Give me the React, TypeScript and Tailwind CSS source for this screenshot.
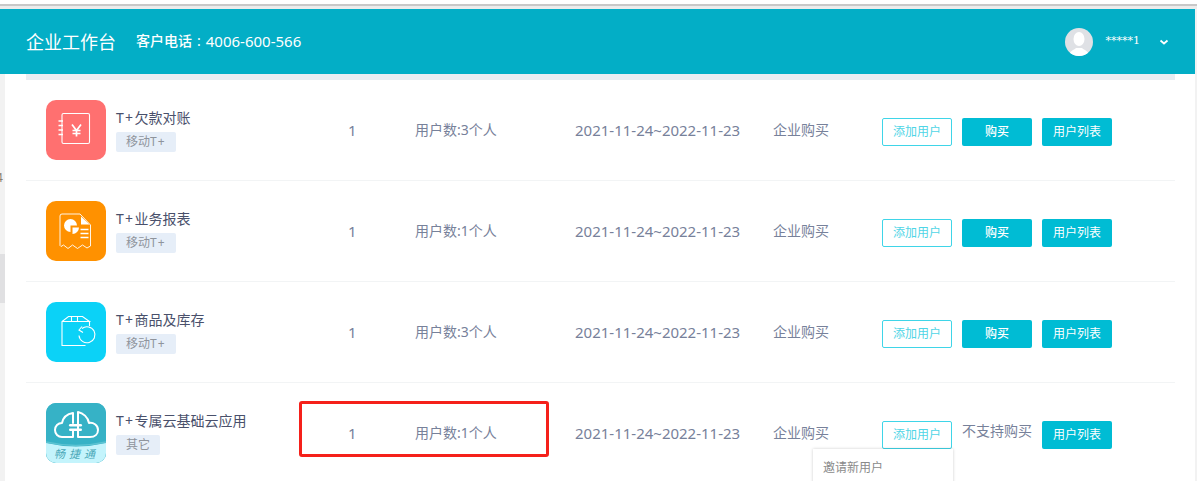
const fontStack = { fontFamily: '"Noto Sans", "Noto Sans CJK SC", sans-serif' };

const BookIcon = () => (
  <svg viewBox="0 0 60 60" className="h-[60px] w-[60px]" fill="none" stroke="#fff">
    <rect x="16" y="13.500" width="27.500" height="30" rx="1.500" strokeWidth="1.100" />
    <path d="M12.500 21h4.500M12.500 25.500h4.500M12.500 30h4.500M12.500 34.500h4.500" strokeWidth="1.300" />
    <path d="M26 24.500l4.500 6 4.500-6M30.500 30.500v6M26.500 30.500h8M26.500 33.500h8" strokeWidth="1.700" />
  </svg>
);

const ReportIcon = () => (
  <svg viewBox="0 0 60 60" className="h-[60px] w-[60px]" fill="none" stroke="#fff">
    <path d="M14 15q0-2 2-2h18l10.500 11v21l-3.500 2-4.500-3-5 3.500-5-3.500-4.500 3.500-4.500-3.500-2.500 1.500-1-1z" strokeWidth="0.900" />
    <path d="M35 15.500l8.500 8H35z" fill="#fff" stroke="none" />
    <path d="M24.500 18a6.500 6.500 0 1 0 0 13v-6.500h6.500a6.500 6.500 0 0 0-6.500-6.500z" fill="#fff" stroke="none" />
    <path d="M26.500 26.500h6.500a6.500 6.500 0 0 1-6.500 6.500z" fill="#fff" stroke="none" />
    <path d="M34.500 28.500h8M34.500 32.500h8M34.500 36.500h8" strokeWidth="1.700" />
  </svg>
);

const BoxIcon = () => (
  <svg viewBox="0 0 60 60" className="h-[60px] w-[60px]" fill="none" stroke="#fff" strokeWidth="1.100">
    <path d="M43.500 24v-4.500M39.500 43.500H16V19.500l6.500-5h14l7 5H16M25.500 14.500v5M31.500 14.500v5" />
    <path d="M36 26.500A8 8 0 1 1 33 33.500" />
    <path d="M36 24.500l-3 3.500 4 2.500" />
  </svg>
);

const CloudIcon = () => (
  <svg viewBox="0 0 60 60" className="h-[60px] w-[60px]">
    <rect width="60" height="60" fill="#36b2c6" />
    <path d="M0 40q30 7 60 0v20H0z" fill="#c4f4fc" />
    <path d="M0 39q30 7 60 0" fill="none" stroke="#5cc3d2" strokeWidth="1.500" />
    <g fill="none" stroke="#fff" strokeWidth="2" strokeLinecap="round" strokeLinejoin="round">
      <path d="M27 10C21 11 17 15 16 20 12 20 9 23 9 27 9 31 12 34 16 34H27V28M27 10V20" />
      <path d="M32 9V34H44C49 34 52 31 52 27 52 22 47 19 43 20 42 14 37 10 32 9z" />
    </g>
    <rect x="23" y="21" width="13" height="2.600" rx="1.300" fill="#fff" />
    <rect x="23" y="25.500" width="13" height="2.600" rx="1.300" fill="#fff" />
    <text x="30.500" y="55" textAnchor="middle" fontSize="11" fontStyle="italic" fill="#4aa8b8" letterSpacing="4" style={{ fontFamily: '"Noto Sans CJK SC", sans-serif' }}>畅捷通</text>
  </svg>
);

const rows = [
  { name: "欠款对账", tag: "移动", tagPlus: true, users: "用户数:3个人", bg: "bg-[#ff7070]", icon: <BookIcon /> },
  { name: "业务报表", tag: "移动", tagPlus: true, users: "用户数:1个人", bg: "bg-[#ff9100]", icon: <ReportIcon /> },
  { name: "商品及库存", tag: "移动", tagPlus: true, users: "用户数:3个人", bg: "bg-[#0bd2f7]", icon: <BoxIcon /> },
  { name: "专属云基础云应用", tag: "其它", tagPlus: false, users: "用户数:1个人", bg: "bg-[#36b2c6]", icon: <CloudIcon />, noBuy: true },
];

const Row = ({ row, last }: { row: (typeof rows)[number]; last: boolean }) => (
  <div className={`flex h-[101px] shrink-0 items-start pl-5 pt-5 ${last ? "" : "border-b border-[#f2f4f5]"}`}>
    <div className={`h-[60px] w-[60px] shrink-0 overflow-hidden rounded-[10px] ${row.bg}`}>{row.icon}</div>
    <div className="ml-2.5 w-[176px] shrink-0 pt-2">
      <div className="h-5 text-sm leading-5 text-[#49506b]">
        <span className="tracking-[1.300px]">T+</span>
        {row.name}
      </div>
      <span className="mt-[2px] inline-block h-5 rounded-[2px] bg-[#e6eef8] px-2.5 text-xs leading-5 text-[#8f949c]">
        {row.tag}
        {row.tagPlus && <span className="tracking-[1px]">T+</span>}
      </span>
    </div>
    <div className="w-[123px] shrink-0 pt-5 pl-[56px] text-[15px] leading-5 text-[#77819a]">1</div>
    <div className="w-[160px] shrink-0 pt-5 text-sm leading-5 text-[#77819a]">{row.users}</div>
    <div className="w-[198px] shrink-0 pt-5 text-[15px] leading-5 text-[#77819a]">2021-11-24~2022-11-23</div>
    <div className="w-[109px] shrink-0 pt-5 text-sm leading-5 text-[#77819a]">企业购买</div>
    <div className="flex shrink-0 gap-2.5 pt-[18px]">
      <button className="h-7 w-[70px] rounded-[2px] border border-[#3fd5e8] bg-white text-xs text-[#4fd5e6]">添加用户</button>
      {row.noBuy ? (
        <div className="w-[70px] text-sm leading-5 whitespace-nowrap text-[#77819a]">不支持购买</div>
      ) : (
        <button className="h-7 w-[70px] rounded-[2px] bg-[#00bcd4] text-xs font-medium text-white">购买</button>
      )}
      <button className="h-7 w-[70px] rounded-[2px] bg-[#00bcd4] text-xs text-white">用户列表</button>
    </div>
  </div>
);

export default function App() {
  return (
    <div className="relative flex h-[481px] w-[1197px] flex-col overflow-hidden bg-white" style={fontStack}>
      {/* browser chrome left at the top of the capture */}
      <div className="h-[9px] shrink-0 bg-[#ececec]">
        <div className="h-1 bg-white" />
        <div className="h-[2px] bg-[#c8c8c8]" />
      </div>
      <div className="flex min-h-0 flex-1 flex-col bg-[#f2f2f2] pr-[2px]">
        <header className="flex h-[65px] shrink-0 items-center bg-[#03aec6] pr-[26px] pl-[26px] text-white">
          <div className="text-lg">企业工作台</div>
          <div className="ml-5 flex items-center text-sm">
            <span className="font-medium">客户电话</span>
            <span className="mx-[5px]">:</span>
            <span className="text-[15px]">4006-600-566</span>
          </div>
          <div className="ml-auto flex items-center">
            <div className="flex h-7 w-7 items-end justify-center overflow-hidden rounded-full bg-[#dfe1e5]">
              <svg viewBox="0 0 28 28" className="h-7 w-7" fill="#fff">
                <ellipse cx="14" cy="11" rx="5.500" ry="7" />
                <path d="M4 28c0-5 5-6 7-8h6c2 2 7 3 7 8z" />
              </svg>
            </div>
            <div className="ml-[13px] text-[11px]" style={{ fontFamily: '"DejaVu Serif", serif' }}>*****1</div>
            <svg viewBox="0 0 10 10" className="ml-[19px] h-2.5 w-2.5" fill="none" stroke="#fff" strokeWidth="1.800">
              <path d="M1.500 3.500L5 6.500l3.500-3" />
            </svg>
          </div>
        </header>
        <div className="flex min-h-0 flex-1 bg-white">
          <div className="w-[5px] shrink-0 overflow-hidden bg-[#f2f2f2] pt-[98px]">
            <div className="-ml-1 h-3 text-xs leading-3 text-[#8a7f70]">4</div>
            <div className="mt-[70px] h-[49px] bg-[#e0e0e2]" />
          </div>
          <div className="min-w-0 flex-1 pr-5 pl-[21px]">
            <div className="h-1.5 bg-[#e9edf2]" />
            {rows.map((row, i) => (
              <Row key={row.name} row={row} last={i === rows.length - 1} />
            ))}
          </div>
        </div>
      </div>
      {/* annotation box over the last row */}
      <div className="absolute top-[401px] left-[299px] h-[56px] w-[250px] rounded-[3px] border-[3px] border-[#f5201a]" />
      {/* dropdown under 添加用户 */}
      <div className="absolute top-[449px] left-[813px] h-[40px] w-[140px] bg-white pt-[9px] pl-2.5 text-xs leading-5 text-[#8a8a8a] shadow-[0_0_3px_rgba(0,0,0,0.2)]">邀请新用户</div>
    </div>
  );
}
